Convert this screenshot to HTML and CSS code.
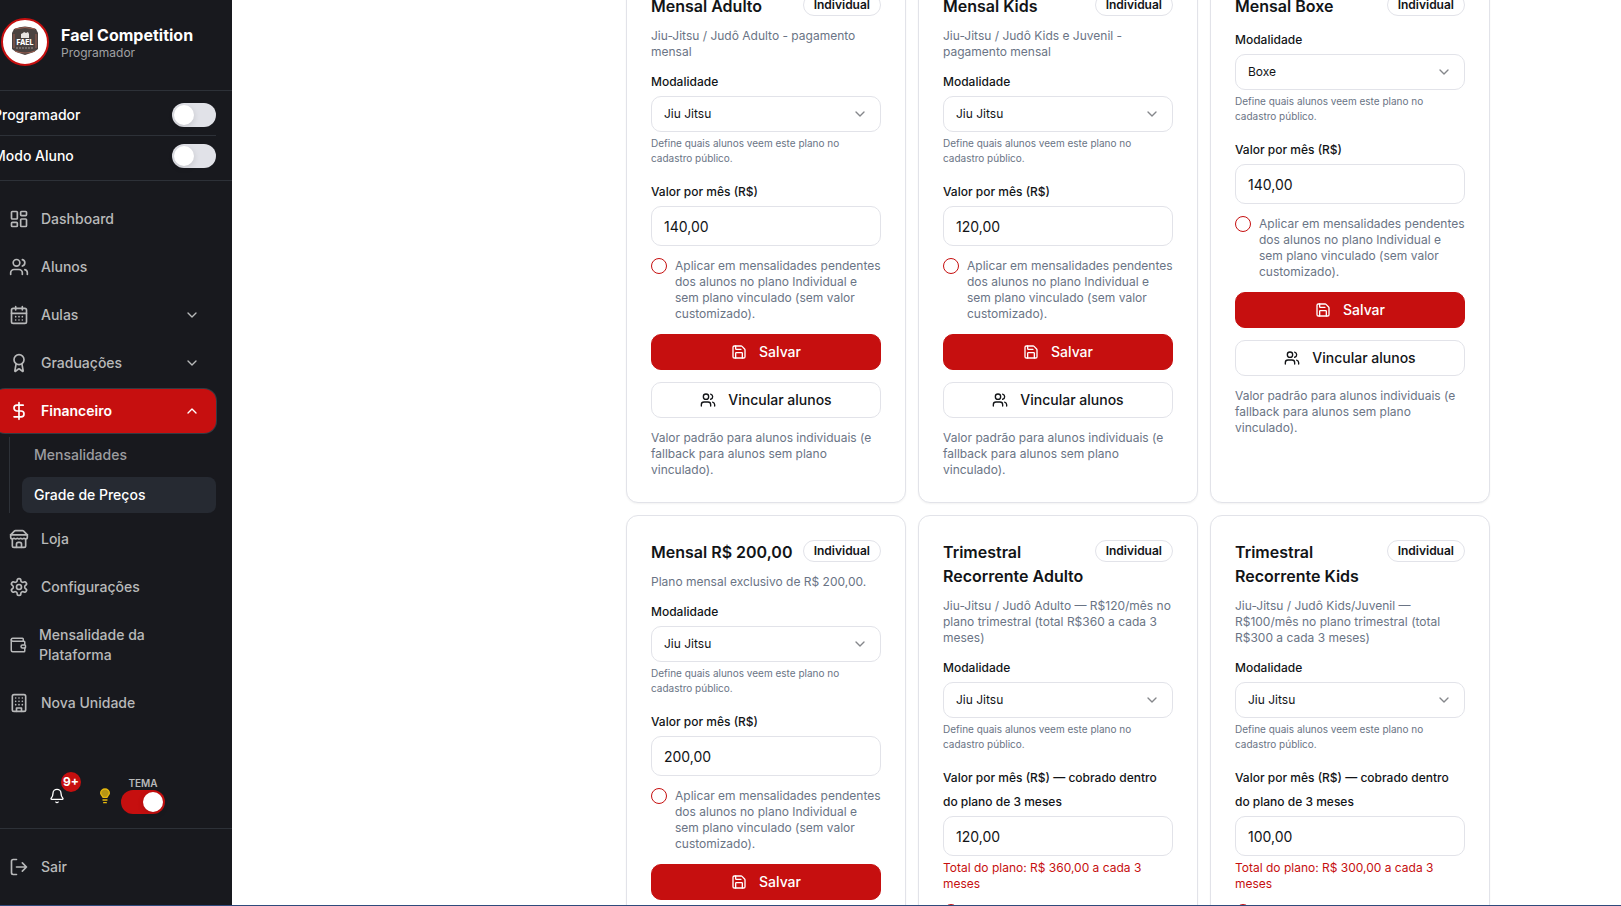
FILE: index.html
```html
<!DOCTYPE html>
<html lang="pt-BR">
<head>
<meta charset="utf-8">
<meta name="viewport" content="width=device-width, initial-scale=1">
<title>Grade de Preços</title>
<link rel="stylesheet" href="styles.css">
</head>
<body>
<svg class="sprite" aria-hidden="true">
  <symbol id="i-dashboard" viewBox="0 0 24 24"><rect width="7" height="9" x="3" y="3" rx="1"/><rect width="7" height="5" x="14" y="3" rx="1"/><rect width="7" height="9" x="14" y="12" rx="1"/><rect width="7" height="5" x="3" y="16" rx="1"/></symbol>
  <symbol id="i-users" viewBox="0 0 24 24"><path d="M16 21v-2a4 4 0 0 0-4-4H6a4 4 0 0 0-4 4v2"/><circle cx="9" cy="7" r="4"/><path d="M22 21v-2a4 4 0 0 0-3-3.87"/><path d="M16 3.13a4 4 0 0 1 0 7.75"/></symbol>
  <symbol id="i-calendar" viewBox="0 0 24 24"><path d="M8 2v4M16 2v4"/><rect width="18" height="18" x="3" y="4" rx="2"/><path d="M3 10h18M8 14h.01M12 14h.01M16 14h.01M8 18h.01M12 18h.01M16 18h.01"/></symbol>
  <symbol id="i-award" viewBox="0 0 24 24"><path d="m15.477 12.89 1.515 8.526a.5.5 0 0 1-.81.47l-3.58-2.687a1 1 0 0 0-1.197 0l-3.586 2.686a.5.5 0 0 1-.81-.469l1.514-8.526"/><circle cx="12" cy="8" r="6"/></symbol>
  <symbol id="i-dollar" viewBox="0 0 24 24"><path d="M12 2v20M17 5H9.5a3.5 3.5 0 0 0 0 7h5a3.5 3.5 0 0 1 0 7H6"/></symbol>
  <symbol id="i-store" viewBox="0 0 24 24"><path d="m2 7 4.41-4.41A2 2 0 0 1 7.83 2h8.34a2 2 0 0 1 1.42.59L22 7"/><path d="M4 12v8a2 2 0 0 0 2 2h12a2 2 0 0 0 2-2v-8"/><path d="M15 22v-4a2 2 0 0 0-2-2h-2a2 2 0 0 0-2 2v4"/><path d="M2 7h20"/><path d="M22 7v3a2 2 0 0 1-2 2a2.7 2.7 0 0 1-1.59-.63.7.7 0 0 0-.82 0A2.7 2.7 0 0 1 16 12a2.7 2.7 0 0 1-1.59-.63.7.7 0 0 0-.82 0A2.7 2.7 0 0 1 12 12a2.7 2.7 0 0 1-1.59-.63.7.7 0 0 0-.82 0A2.7 2.7 0 0 1 8 12a2.7 2.7 0 0 1-1.59-.63.7.7 0 0 0-.82 0A2.7 2.7 0 0 1 4 12a2 2 0 0 1-2-2V7"/></symbol>
  <symbol id="i-settings" viewBox="0 0 24 24"><path d="M12.22 2h-.44a2 2 0 0 0-2 2v.18a2 2 0 0 1-1 1.73l-.43.25a2 2 0 0 1-2 0l-.15-.08a2 2 0 0 0-2.73.73l-.22.38a2 2 0 0 0 .73 2.73l.15.1a2 2 0 0 1 1 1.72v.51a2 2 0 0 1-1 1.74l-.15.09a2 2 0 0 0-.73 2.73l.22.38a2 2 0 0 0 2.73.73l.15-.08a2 2 0 0 1 2 0l.43.25a2 2 0 0 1 1 1.73V20a2 2 0 0 0 2 2h.44a2 2 0 0 0 2-2v-.18a2 2 0 0 1 1-1.73l.43-.25a2 2 0 0 1 2 0l.15.08a2 2 0 0 0 2.73-.73l.22-.39a2 2 0 0 0-.73-2.73l-.15-.08a2 2 0 0 1-1-1.74v-.5a2 2 0 0 1 1-1.74l.15-.09a2 2 0 0 0 .73-2.73l-.22-.38a2 2 0 0 0-2.73-.73l-.15.08a2 2 0 0 1-2 0l-.43-.25a2 2 0 0 1-1-1.73V4a2 2 0 0 0-2-2z"/><circle cx="12" cy="12" r="3"/></symbol>
  <symbol id="i-wallet" viewBox="0 0 24 24"><path d="M19 7V4a1 1 0 0 0-1-1H5a2 2 0 0 0 0 4h15a1 1 0 0 1 1 1v4h-3a2 2 0 0 0 0 4h3a1 1 0 0 0 1-1v-2a1 1 0 0 0-1-1"/><path d="M3 5v14a2 2 0 0 0 2 2h15a1 1 0 0 0 1-1v-4"/></symbol>
  <symbol id="i-building" viewBox="0 0 24 24"><rect width="16" height="20" x="4" y="2" rx="2"/><path d="M9 22v-4h6v4M8 6h.01M16 6h.01M12 6h.01M12 10h.01M12 14h.01M16 10h.01M16 14h.01M8 10h.01M8 14h.01"/></symbol>
  <symbol id="i-down" viewBox="0 0 24 24"><path d="m6 9 6 6 6-6"/></symbol>
  <symbol id="i-up" viewBox="0 0 24 24"><path d="m18 15-6-6-6 6"/></symbol>
  <symbol id="i-bell" viewBox="0 0 24 24"><path d="M10.268 21a2 2 0 0 0 3.464 0"/><path d="M3.262 15.326A1 1 0 0 0 4 17h16a1 1 0 0 0 .74-1.673C19.41 13.956 18 12.499 18 8A6 6 0 0 0 6 8c0 4.499-1.411 5.956-2.738 7.326"/></symbol>
  <symbol id="i-logout" viewBox="0 0 24 24"><path d="M9 21H5a2 2 0 0 1-2-2V5a2 2 0 0 1 2-2h4M16 17l5-5-5-5M21 12H9"/></symbol>
  <symbol id="i-save" viewBox="0 0 24 24"><path d="M15.2 3a2 2 0 0 1 1.4.6l3.8 3.8a2 2 0 0 1 .6 1.4V19a2 2 0 0 1-2 2H5a2 2 0 0 1-2-2V5a2 2 0 0 1 2-2z"/><path d="M17 21v-7a1 1 0 0 0-1-1H8a1 1 0 0 0-1 1v7M7 3v4a1 1 0 0 0 1 1h7"/></symbol>
</svg>
<div class="shell">
  <aside class="sidebar">
    <header class="brand">
      <svg class="avatar" viewBox="0 0 48 48" role="img" aria-label="Fael Competition">
        <circle cx="24" cy="24" r="23" fill="#fff" stroke="#c60f0f" stroke-width="2"/>
        <path d="M13 11Q24 6 35 11L37 15V31L33 34 24 37 15 34 11 31V15Z" fill="#4a4240"/>
        <path d="M14 11Q24 8 34 11M14 33Q24 37 34 33M13 16V30M35 16V30" fill="none" stroke="#9a5f50"/>
        <path d="M20 20V16l2-1 1-1 2 1 2-1 1 2v4Z" fill="#e9e4e2"/>
        <text class="crest" x="24" y="27" text-anchor="middle">FAEL</text>
        <path d="M15 30H33" stroke="#9b9492" stroke-dasharray="2 1"/>
      </svg>
      <div>
        <div class="brand-name">Fael Competition</div>
        <div class="brand-role">Programador</div>
      </div>
    </header>
    <div class="modes">
      <label class="mode">Programador<input class="switch" type="checkbox" role="switch"></label>
      <label class="mode">Modo Aluno<input class="switch" type="checkbox" role="switch"></label>
    </div>
    <nav class="nav">
      <a class="item" href="#"><svg class="icon"><use href="#i-dashboard"/></svg>Dashboard</a>
      <a class="item" href="#"><svg class="icon"><use href="#i-users"/></svg>Alunos</a>
      <button class="item"><svg class="icon"><use href="#i-calendar"/></svg>Aulas<svg class="icon chevron"><use href="#i-down"/></svg></button>
      <button class="item"><svg class="icon"><use href="#i-award"/></svg>Graduações<svg class="icon chevron"><use href="#i-down"/></svg></button>
      <button class="item active"><svg class="icon"><use href="#i-dollar"/></svg>Financeiro<svg class="icon chevron"><use href="#i-up"/></svg></button>
      <div class="submenu">
        <a class="subitem" href="#">Mensalidades</a>
        <a class="subitem current" href="#">Grade de Preços</a>
      </div>
      <a class="item" href="#"><svg class="icon"><use href="#i-store"/></svg>Loja</a>
      <a class="item" href="#"><svg class="icon"><use href="#i-settings"/></svg>Configurações</a>
      <a class="item" href="#"><svg class="icon narrow"><use href="#i-wallet"/></svg><span>Mensalidade da<br>Plataforma</span></a>
      <a class="item" href="#"><svg class="icon"><use href="#i-building"/></svg>Nova Unidade</a>
    </nav>
    <div class="tools">
      <button class="bell" aria-label="Notificações"><svg class="icon small"><use href="#i-bell"/></svg><span class="count">9+</span></button>
      <svg class="icon small bulb" viewBox="0 0 24 24"><path class="glass" d="M15 14c.2-1 .7-1.700 1.500-2.500C17.700 10.200 18.500 9 18.500 8A6.500 6.500 0 0 0 5.500 8c0 1 .7 2.200 2 3.500.7.700 1.300 1.500 1.500 2.500Z"/><path d="M9 18h6M10 22h4"/></svg>
      <label class="theme">TEMA<input class="switch" type="checkbox" role="switch" checked></label>
    </div>
    <footer class="foot">
      <button class="item"><svg class="icon"><use href="#i-logout"/></svg>Sair</button>
    </footer>
  </aside>
  <main class="main">
    <div class="grid">
      <section class="card">
        <div class="head"><h2>Mensal Adulto</h2><span class="badge">Individual</span></div>
        <p class="desc">Jiu-Jitsu / Judô Adulto - pagamento mensal</p>
        <label class="label" for="m1">Modalidade</label>
        <div class="pick"><select id="m1"><option>Jiu Jitsu</option></select><svg class="icon"><use href="#i-down"/></svg></div>
        <p class="hint">Define quais alunos veem este plano no cadastro público.</p>
        <label class="label" for="v1">Valor por mês (R$)</label>
        <input class="value" id="v1" type="text" value="140,00">
        <label class="apply"><input type="checkbox"><span>Aplicar em mensalidades pendentes dos alunos no plano Individual e sem plano vinculado (sem valor customizado).</span></label>
        <button class="btn primary"><svg class="icon"><use href="#i-save"/></svg>Salvar</button>
        <button class="btn"><svg class="icon"><use href="#i-users"/></svg>Vincular alunos</button>
        <p class="note">Valor padrão para alunos individuais (e fallback para alunos sem plano vinculado).</p>
      </section>
      <section class="card">
        <div class="head"><h2>Mensal Kids</h2><span class="badge">Individual</span></div>
        <p class="desc">Jiu-Jitsu / Judô Kids e Juvenil - pagamento mensal</p>
        <label class="label" for="m2">Modalidade</label>
        <div class="pick"><select id="m2"><option>Jiu Jitsu</option></select><svg class="icon"><use href="#i-down"/></svg></div>
        <p class="hint">Define quais alunos veem este plano no cadastro público.</p>
        <label class="label" for="v2">Valor por mês (R$)</label>
        <input class="value" id="v2" type="text" value="120,00">
        <label class="apply"><input type="checkbox"><span>Aplicar em mensalidades pendentes dos alunos no plano Individual e sem plano vinculado (sem valor customizado).</span></label>
        <button class="btn primary"><svg class="icon"><use href="#i-save"/></svg>Salvar</button>
        <button class="btn"><svg class="icon"><use href="#i-users"/></svg>Vincular alunos</button>
        <p class="note">Valor padrão para alunos individuais (e fallback para alunos sem plano vinculado).</p>
      </section>
      <section class="card">
        <div class="head"><h2>Mensal Boxe</h2><span class="badge">Individual</span></div>
        <label class="label" for="m3">Modalidade</label>
        <div class="pick"><select id="m3"><option>Boxe</option></select><svg class="icon"><use href="#i-down"/></svg></div>
        <p class="hint">Define quais alunos veem este plano no cadastro público.</p>
        <label class="label" for="v3">Valor por mês (R$)</label>
        <input class="value" id="v3" type="text" value="140,00">
        <label class="apply"><input type="checkbox"><span>Aplicar em mensalidades pendentes dos alunos no plano Individual e sem plano vinculado (sem valor customizado).</span></label>
        <button class="btn primary"><svg class="icon"><use href="#i-save"/></svg>Salvar</button>
        <button class="btn"><svg class="icon"><use href="#i-users"/></svg>Vincular alunos</button>
        <p class="note">Valor padrão para alunos individuais (e fallback para alunos sem plano vinculado).</p>
      </section>
      <section class="card">
        <div class="head"><h2>Mensal R$ 200,00</h2><span class="badge">Individual</span></div>
        <p class="desc">Plano mensal exclusivo de R$ 200,00.</p>
        <label class="label" for="m4">Modalidade</label>
        <div class="pick"><select id="m4"><option>Jiu Jitsu</option></select><svg class="icon"><use href="#i-down"/></svg></div>
        <p class="hint">Define quais alunos veem este plano no cadastro público.</p>
        <label class="label" for="v4">Valor por mês (R$)</label>
        <input class="value" id="v4" type="text" value="200,00">
        <label class="apply"><input type="checkbox"><span>Aplicar em mensalidades pendentes dos alunos no plano Individual e sem plano vinculado (sem valor customizado).</span></label>
        <button class="btn primary"><svg class="icon"><use href="#i-save"/></svg>Salvar</button>
      </section>
      <section class="card">
        <div class="head"><h2>Trimestral Recorrente Adulto</h2><span class="badge">Individual</span></div>
        <p class="desc">Jiu-Jitsu / Judô Adulto — R$120/mês no plano trimestral (total R$360 a cada 3 meses)</p>
        <label class="label" for="m5">Modalidade</label>
        <div class="pick"><select id="m5"><option>Jiu Jitsu</option></select><svg class="icon"><use href="#i-down"/></svg></div>
        <p class="hint">Define quais alunos veem este plano no cadastro público.</p>
        <label class="label" for="v5">Valor por mês (R$) — cobrado dentro do plano de 3 meses</label>
        <input class="value" id="v5" type="text" value="120,00">
        <p class="total">Total do plano: R$ 360,00 a cada 3 meses</p>
        <label class="apply"><input type="checkbox" aria-label="Aplicar em mensalidades pendentes"></label>
      </section>
      <section class="card">
        <div class="head"><h2>Trimestral Recorrente Kids</h2><span class="badge">Individual</span></div>
        <p class="desc">Jiu-Jitsu / Judô Kids/Juvenil — R$100/mês no plano trimestral (total R$300 a cada 3 meses)</p>
        <label class="label" for="m6">Modalidade</label>
        <div class="pick"><select id="m6"><option>Jiu Jitsu</option></select><svg class="icon"><use href="#i-down"/></svg></div>
        <p class="hint">Define quais alunos veem este plano no cadastro público.</p>
        <label class="label" for="v6">Valor por mês (R$) — cobrado dentro do plano de 3 meses</label>
        <input class="value" id="v6" type="text" value="100,00">
        <p class="total">Total do plano: R$ 300,00 a cada 3 meses</p>
        <label class="apply"><input type="checkbox" aria-label="Aplicar em mensalidades pendentes"></label>
      </section>
    </div>
  </main>
</div>
</body>
</html>
```

FILE: styles.css
```css
* { box-sizing: border-box; }
body { margin: 0; background: #fff; color: #121417; font-family: Inter, "Liberation Sans", sans-serif; font-size: 14px; line-height: 20px; }
h2, p { margin: 0; }
button, input, select { font: inherit; color: inherit; }
button { cursor: pointer; }
.sprite { display: none; }
.icon { width: 20px; height: 20px; flex: none; fill: none; stroke: currentColor; stroke-width: 2; stroke-linecap: round; stroke-linejoin: round; }
.icon.small { width: 16px; height: 16px; }
.icon.narrow { width: 18px; }

.shell { display: flex; height: 100vh; overflow: hidden; border-bottom: 1px solid #2f4a7c; }

.sidebar { display: flex; flex-direction: column; flex: none; width: 255px; margin-left: -23px; background: #18191e; color: #fff; }
.brand { display: flex; align-items: center; gap: 12px; padding: 18px 24px 24px; border-bottom: 1px solid #2d3138; }
.avatar { width: 48px; height: 48px; flex: none; }
.crest { font-size: 7px; font-weight: 800; fill: #fff; }
.brand-name { padding-top: 2px; font-size: 16px; font-weight: 700; }
.brand-role { font-size: 12px; line-height: 16px; color: #a0a1a3; }
.modes { padding: 4px 16px; border-bottom: 1px solid #2d3138; }
.mode { display: flex; align-items: center; justify-content: space-between; padding: 8px 0; font-weight: 500; }
.mode + .mode { border-top: 1px solid #2d3138; }
.switch { appearance: none; display: flex; align-items: center; width: 44px; height: 24px; margin: 0; padding: 2px; border-radius: 12px; background: #e1e2e8; }
.switch::before { content: ""; width: 20px; height: 20px; border-radius: 50%; background: #fff; box-shadow: 0 2px 6px #0002; }
.switch:checked { background: #c60f0f; justify-content: flex-end; }

.nav { display: flex; flex-direction: column; gap: 4px; flex: 1; padding: 16px; }
.item { display: flex; align-items: center; gap: 12px; width: 100%; padding: 12px 16px; border: 0; border-radius: 12px; background: none; color: #b8b9ba; font-weight: 500; text-align: left; text-decoration: none; }
.item.active { background: #c60f0f; color: #fff; font-weight: 600; box-shadow: 0 0 0 1px #343a42; }
.chevron { width: 16px; height: 16px; margin-left: auto; }
.submenu { display: flex; flex-direction: column; gap: 4px; margin-left: 16px; padding-left: 12px; border-left: 1px solid #2d3138; }
.subitem { padding: 8px 12px; border-radius: 8px; color: #9c9da0; text-decoration: none; font-weight: 500; }
.subitem.current { background: #262a32; color: #fff; }

.tools { display: flex; align-items: flex-end; padding: 0 72px 14px; }
.bell { position: relative; display: flex; padding: 0; border: 0; margin-bottom: 10px; background: none; color: #fff; }
.count { position: absolute; left: 12px; top: -16px; width: 20px; height: 20px; border-radius: 50%; background: #c60f0f; font-size: 12px; font-weight: 700; text-align: center; }
.bulb { margin: 0 8px 10px 32px; color: #e6b90f; }
.glass { fill: #b89614; }
.theme { display: flex; flex-direction: column; align-items: center; color: #b8b9ba; font-size: 10px; line-height: 13px; font-weight: 600; }
.foot { padding: 16px; border-top: 1px solid #2d3138; }

.main { flex: 1; min-width: 0; padding-right: 131px; }
.grid { display: grid; grid-template-columns: repeat(3, minmax(0, 1fr)); gap: 12px; max-width: 864px; margin: -31px 0 0 auto; }
.card { display: flex; flex-direction: column; padding: 24px; border: 1px solid #e2e3e9; border-radius: 12px; background: #fff; box-shadow: 0 1px 2px #0000000d; }
.head { display: flex; align-items: flex-start; justify-content: space-between; gap: 8px; margin-bottom: 10px; }
h2 { font-size: 16px; line-height: 24px; font-weight: 600; }
.badge { flex: none; padding: 2px 10px; border: 1px solid #e2e3e9; border-radius: 12px; font-size: 12px; line-height: 16px; font-weight: 600; }
.desc, .note, .apply, .total { font-size: 12px; line-height: 16px; color: #6a7485; }
.desc { margin-bottom: 10px; }
.label { margin-bottom: 2px; font-size: 12px; line-height: 24px; font-weight: 500; }
.pick { display: grid; align-items: center; }
.pick > * { grid-area: 1 / 1; }
.pick select { appearance: none; width: 100%; height: 36px; padding: 0 12px; border: 1px solid #e2e3e9; border-radius: 10px; background: #fff; font-size: 12px; }
.pick .icon { width: 16px; height: 16px; margin-right: 13px; justify-self: end; color: #85878b; pointer-events: none; }
.hint { margin: 4px 0 14px; font-size: 10px; line-height: 15px; color: #6a7485; }
.value { width: 100%; height: 40px; padding: 0 12px; border: 1px solid #e2e3e9; border-radius: 10px; background: #fff; }
.total { margin-top: 4px; color: #c60f0f; }
.apply { display: flex; align-items: flex-start; gap: 8px; margin: 12px 0; }
.apply input { appearance: none; flex: none; width: 16px; height: 16px; margin: 0; border: 1px solid #c60f0f; border-radius: 50%; }
.btn { display: flex; align-items: center; justify-content: center; gap: 12px; height: 36px; margin-bottom: 12px; border: 1px solid #e2e3e9; border-radius: 10px; background: #fff; font-weight: 500; }
.btn.primary { border-color: #c60f0f; background: #c60f0f; color: #fff; }
.btn .icon { width: 16px; height: 16px; }
```
